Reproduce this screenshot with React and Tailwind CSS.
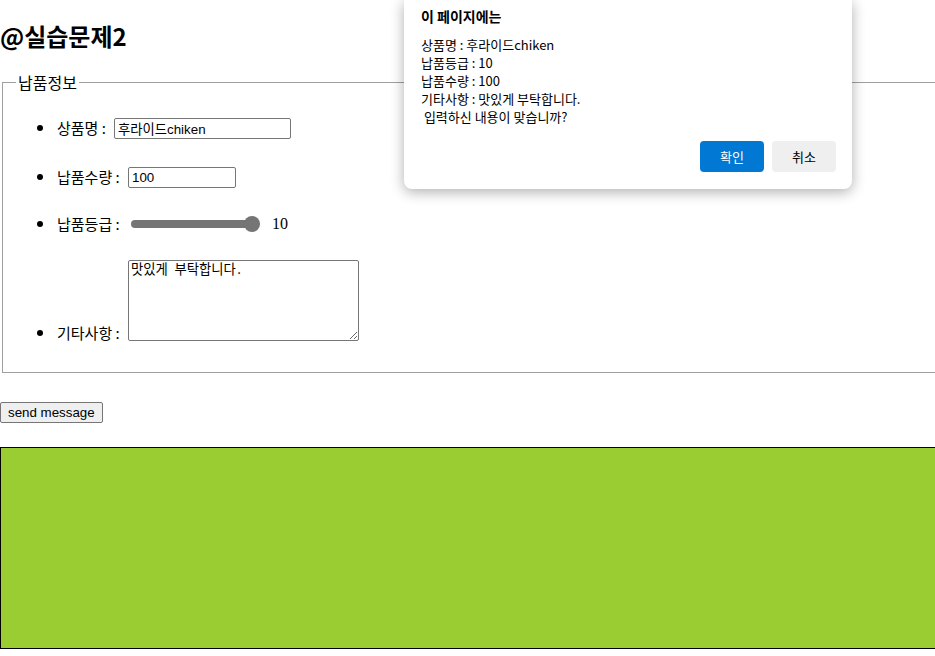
// App.jsx
const kr = { fontFamily: '"Noto Sans CJK KR", sans-serif' };
const serif = { fontFamily: '"Liberation Serif", "Noto Sans CJK KR", serif' };
const ctrl = { fontFamily: '"Liberation Sans", "Noto Sans CJK KR", sans-serif' };
const mono = { fontFamily: '"Noto Sans Mono CJK KR", "Liberation Mono", "Noto Sans CJK KR", monospace' };

function Bullet() {
  return <span className="mr-[14px] ml-[34px] inline-block h-[6px] w-[6px] shrink-0 rounded-full bg-black" />;
}

function ConfirmDialog() {
  const lines = [
    '상품명 : 후라이드chiken',
    '납품등급 : 10',
    '납품수량 : 100',
    '기타사항 : 맛있게 부탁합니다.',
    '\u00a0입력하신 내용이 맞습니까?',
  ];
  return (
    <div
      className="absolute top-0 left-[404px] w-[448px] rounded-b-[8px] bg-white pt-[6px] pr-[16px] pb-[17px] pl-[17px] shadow-[0_3px_14px_rgba(0,0,0,0.32)]"
      style={kr}
    >
      <div className="text-[14px] leading-[20px] font-bold text-black">이 페이지에는</div>
      <div className="mt-[10px] text-[13px] leading-[18px] text-black">
        {lines.map((l) => (
          <div key={l} className="whitespace-pre">{l}</div>
        ))}
      </div>
      <div className="mt-[15px] flex justify-end gap-2">
        <button className="h-[31px] w-[64px] rounded-[4px] bg-[#0078d4] text-[13px] text-white">확인</button>
        <button className="h-[31px] w-[64px] rounded-[4px] bg-[#efefef] text-[13px] text-black">취소</button>
      </div>
    </div>
  );
}

export default function App() {
  return (
    <div className="relative min-h-[656px] overflow-hidden bg-white text-black" style={serif}>
      <h2 className="mt-5 text-[24px] leading-[32px] font-bold" style={kr}>@실습문제2</h2>

      <fieldset className="mt-5 ml-[2px] border border-r-0 border-[#a0a0a0] pb-[27px]">
        <legend className="ml-[13px] px-[2px] text-[16px] leading-[21px]" style={kr}>납품정보</legend>
        <ul className="pt-[23px]">
          <li className="flex h-6 items-center">
            <Bullet />
            <span className="w-[57px] text-[15px] whitespace-nowrap" style={kr}>상품명 :</span>
            <input
              type="text"
              defaultValue="후라이드chiken"
              className="h-[21px] w-[177px] rounded-[2px] border border-[#767676] px-[3px] text-[13.33px]"
              style={ctrl}
            />
          </li>
          <li className="mt-[25px] flex h-6 items-center">
            <Bullet />
            <span className="w-[71px] text-[15px] whitespace-nowrap" style={kr}>납품수량 :</span>
            <input
              type="text"
              defaultValue="100"
              className="h-[21px] w-[108px] rounded-[2px] border border-[#767676] px-[3px] text-[13.33px]"
              style={ctrl}
            />
          </li>
          <li className="mt-[23px] flex h-6 items-center">
            <Bullet />
            <span className="w-[73px] text-[15px] whitespace-nowrap" style={kr}>납품등급 :</span>
            <div className="relative flex h-4 w-[129px] items-center">
              <div className="ml-[1px] h-2 w-[126px] rounded-full bg-[#757575]" />
              <div className="absolute left-[114px] h-4 w-4 rounded-full bg-[#757575]" />
            </div>
            <span className="ml-[13px] text-[16px]">10</span>
          </li>
          <li className="mt-[24px] flex items-start">
            <div className="mt-[61px] flex h-6 items-center">
              <Bullet />
              <span className="w-[71px] text-[15px] whitespace-nowrap" style={kr}>기타사항 :</span>
            </div>
            <textarea
              defaultValue="맛있게 부탁합니다."
              className="h-[81px] w-[231px] resize rounded-[2px] border border-[#767676] px-[2px] text-[13.33px] leading-[16px]"
              style={mono}
            />
          </li>
        </ul>
      </fieldset>

      <button
        className="mt-[29px] h-[21px] rounded-[2px] border border-[#767676] bg-[#efefef] px-[7px] text-[13.33px] leading-[19px]"
        style={ctrl}
      >
        send message
      </button>

      <div className="mt-[23px] h-[202px] border-y border-l border-black bg-[#9acd32]" />

      <ConfirmDialog />
    </div>
  );
}
